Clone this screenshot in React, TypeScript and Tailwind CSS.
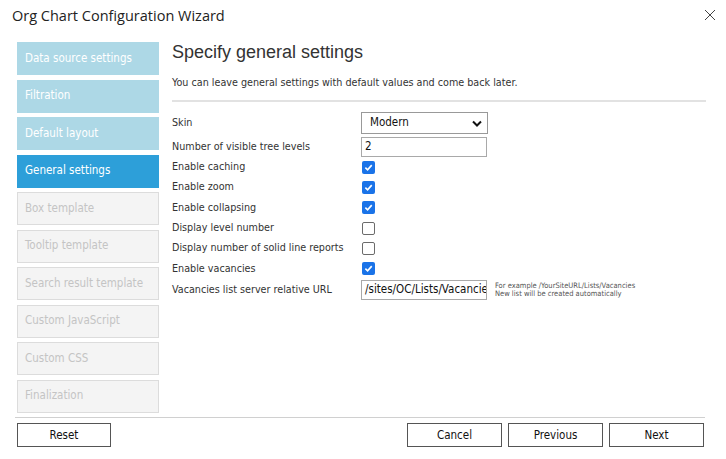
import React from "react";

const steps: { label: string; state: "done" | "active" | "disabled" }[] = [
  { label: "Data source settings", state: "done" },
  { label: "Filtration", state: "done" },
  { label: "Default layout", state: "done" },
  { label: "General settings", state: "active" },
  { label: "Box template", state: "disabled" },
  { label: "Tooltip template", state: "disabled" },
  { label: "Search result template", state: "disabled" },
  { label: "Custom JavaScript", state: "disabled" },
  { label: "Custom CSS", state: "disabled" },
  { label: "Finalization", state: "disabled" },
];

const checks: { label: string; checked: boolean }[] = [
  { label: "Enable caching", checked: true },
  { label: "Enable zoom", checked: true },
  { label: "Enable collapsing", checked: true },
  { label: "Display level number", checked: false },
  { label: "Display number of solid line reports", checked: false },
  { label: "Enable vacancies", checked: true },
];

const font = { fontFamily: "'DejaVu Sans Condensed', 'DejaVu Sans', sans-serif", fontStretch: "condensed" as const };

function Check({ checked }: { checked?: boolean }) {
  if (checked) {
    return (
      <div className="w-[13px] h-[13px] rounded-[2px] bg-[#1a73e8] flex items-center justify-center">
        <svg width="9" height="9" viewBox="0 0 10 10">
          <path d="M1.5 5.2 L4 7.6 L8.6 2.4" stroke="white" strokeWidth="1.8" fill="none" />
        </svg>
      </div>
    );
  }
  return <div className="w-[13px] h-[13px] rounded-[2px] border border-[#6b6b6b] bg-white" />;
}

export default function App() {
  return (
    <div
      className="w-[726px] h-[459px] bg-white text-[#333] relative overflow-hidden"
      style={font}
    >
      <div className="flex items-center justify-between pl-[12px] pr-[10px] pt-[3px] h-[28px]">
        <div
          className="text-[14.5px] text-[#222]"
          style={{ fontFamily: "'Open Sans', sans-serif", fontStretch: "normal" }}
        >
          Org Chart Configuration Wizard
        </div>
        <svg width="12" height="12" viewBox="0 0 12 12" className="mt-[-2px]">
          <path d="M1 1 L11 11 M11 1 L1 11" stroke="#444" strokeWidth="1" />
        </svg>
      </div>

      <div className="flex pl-[17px] pt-[14px]">
        <div className="w-[142px] flex flex-col gap-[4.5px]">
          {steps.map((s) => (
            <div
              key={s.label}
              className={
                "h-[33px] flex items-center pl-[7px] text-[11.5px] border whitespace-nowrap " +
                (s.state === "done"
                  ? "bg-[#add8e6] border-[#add8e6] text-white"
                  : s.state === "active"
                  ? "bg-[#2d9fd9] border-[#2d9fd9] text-white"
                  : "bg-[#f4f4f4] border-[#dcdcdc] text-[#c4c4c4]")
              }
            >
              {s.label}
            </div>
          ))}
        </div>

        <div className="ml-[13px] w-[534px]">
          <div
            className="text-[18px] text-[#333] leading-[22px] mt-[-1px]"
            style={{ fontFamily: "'Liberation Sans', Arial, sans-serif", fontStretch: "normal" }}
          >
            Specify general settings
          </div>
          <div className="text-[10.7px] mt-[13px] leading-[14px]">
            You can leave general settings with default values and come back later.
          </div>
          <div className="h-[2px] bg-[#e2e2e2] mt-[10px] mb-[10px]" />

          <div className="flex flex-col text-[10.7px]">
            <div className="flex items-center h-[22px] mb-[3px]">
              <div className="w-[189px]">Skin</div>
              <div className="w-[127px] h-[22px] border border-[#999] flex items-center justify-between pl-[8px] pr-[5px] text-[11.5px] text-[#111]">
                <span>Modern</span>
                <svg width="10" height="7" viewBox="0 0 10 7">
                  <path d="M1 1.5 L5 5.5 L9 1.5" stroke="#111" strokeWidth="2" fill="none" />
                </svg>
              </div>
            </div>
            <div className="flex items-center h-[20px]">
              <div className="w-[189px]">Number of visible tree levels</div>
              <div className="w-[126px] h-[20px] border border-[#a9a9a9] flex items-center pl-[3px] text-[11.5px] text-[#111]">
                2
              </div>
            </div>
            {checks.map((c) => (
              <div key={c.label} className="flex items-center h-[20.3px] whitespace-nowrap">
                <div className="w-[189px]">{c.label}</div>
                <div className="pl-[1px]">
                  <Check checked={c.checked} />
                </div>
              </div>
            ))}
            <div className="flex items-center h-[20px] mt-[1px]">
              <div className="w-[189px]">Vacancies list server relative URL</div>
              <div className="w-[126px] h-[20px] border border-[#a9a9a9] flex items-center pl-[3px] text-[11.5px] text-[#111] overflow-hidden whitespace-nowrap">
                /sites/OC/Lists/Vacancies
              </div>
              <div className="ml-[8px] text-[7.5px] leading-[8px] text-[#555] whitespace-nowrap">
                <div>For example /YourSiteURL/Lists/Vacancies</div>
                <div>New list will be created automatically</div>
              </div>
            </div>
          </div>
        </div>
      </div>

      <div className="absolute left-[15px] right-[21px] top-[417px] h-[1px] bg-[#d0d0d0]" />
      <div className="absolute left-[17px] right-[22px] top-[423px] flex justify-between">
        <button className="w-[94px] h-[24px] pt-[1px] border border-[#555] bg-white text-[11.5px] text-[#111]">Reset</button>
        <div className="flex gap-[6px]">
          <button className="w-[95px] h-[24px] pt-[1px] border border-[#555] bg-white text-[11.5px] text-[#111]">Cancel</button>
          <button className="w-[95px] h-[24px] pt-[1px] border border-[#555] bg-white text-[11.5px] text-[#111]">Previous</button>
          <button className="w-[95px] h-[24px] pt-[1px] border border-[#555] bg-white text-[11.5px] text-[#111]">Next</button>
        </div>
      </div>
    </div>
  );
}
